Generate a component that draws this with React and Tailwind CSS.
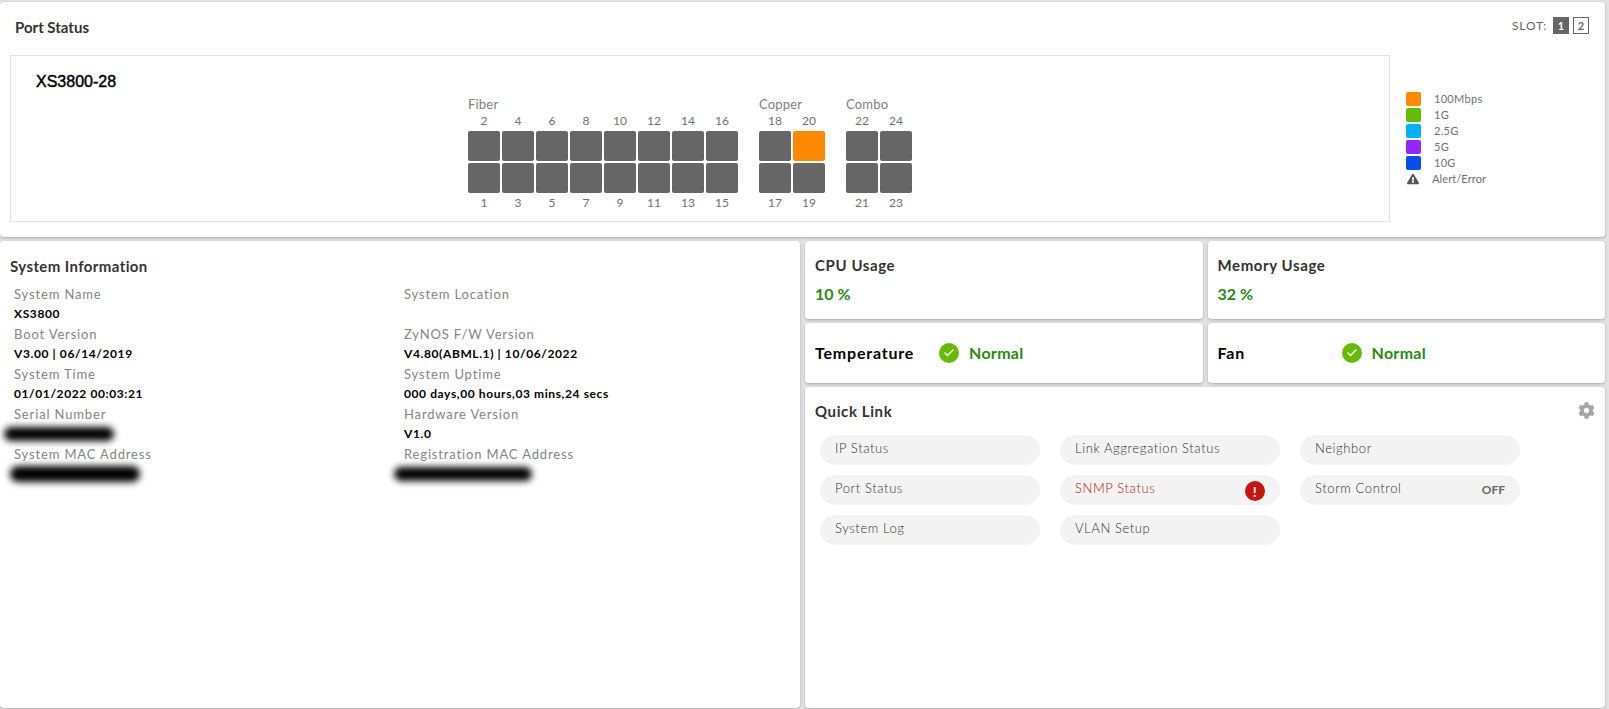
import React from "react";
import { Check } from "lucide-react";
import { FaCog, FaExclamationTriangle } from "react-icons/fa";

const groups = [
  { name: "Fiber", top: [2, 4, 6, 8, 10, 12, 14, 16], bottom: [1, 3, 5, 7, 9, 11, 13, 15] },
  { name: "Copper", top: [18, 20], bottom: [17, 19] },
  { name: "Combo", top: [22, 24], bottom: [21, 23] },
];

const legend = [
  { label: "100Mbps", color: "bg-[#ff8a00]" },
  { label: "1G", color: "bg-[#64bc00]" },
  { label: "2.5G", color: "bg-[#00b0ff]" },
  { label: "5G", color: "bg-[#9326ff]" },
  { label: "10G", color: "bg-[#0050f0]" },
];

function PortGroup({ name, top, bottom }) {
  return (
    <div>
      <div className="h-4 text-[13px] leading-4 tracking-[0.2px] text-[#808080]">{name}</div>
      <div className="flex gap-[2px]">
        {top.map((port, i) => (
          <div key={port} className="w-8">
            <div className="mt-px mb-[2px] h-4 text-center text-[12px] leading-4 text-[#707070]">{port}</div>
            <div
              className={
                port === 20
                  ? "h-[30px] rounded-[2px] bg-[#ff8a00]"
                  : "h-[30px] rounded-[2px] bg-[#666666]"
              }
            ></div>
            <div className="mt-[2px] h-[30px] rounded-[2px] bg-[#666666]"></div>
            <div className="mt-[2px] h-4 text-center text-[12px] leading-4 text-[#707070]">{bottom[i]}</div>
          </div>
        ))}
      </div>
    </div>
  );
}

function Info({ label, value, blob }) {
  return (
    <div>
      <div className="h-5 pl-1 text-[13px] leading-5 tracking-[0.85px] text-[#858585]">{label}</div>
      <div className="flex h-5 items-center pl-1 text-[12px] leading-5 font-bold tracking-[0.6px] whitespace-pre text-black">
        {blob ? <div className={blob}></div> : value}
      </div>
    </div>
  );
}

function StatCard({ title, value }) {
  return (
    <div className="h-[78px] rounded bg-white pt-[14px] pl-[10px] shadow-[0_1px_3px_rgba(0,0,0,0.25)]">
      <div className="text-[15px] leading-5 font-bold tracking-[0.6px] text-[#333333]">{title}</div>
      <div className="mt-[9px] text-[16px] leading-5 font-bold text-[#2a8a10]">{value}</div>
    </div>
  );
}

function HealthCard({ title }) {
  return (
    <div className="flex h-[60px] items-center rounded bg-white pl-[10px] shadow-[0_1px_3px_rgba(0,0,0,0.25)]">
      <div className="w-[124px] text-[16px] font-bold tracking-[0.8px] text-black">{title}</div>
      <div className="flex h-5 w-5 items-center justify-center rounded-full bg-[#64bc00]">
        <Check size={12} strokeWidth={3} className="text-white" />
      </div>
      <div className="ml-[10px] text-[16px] font-bold tracking-[0.3px] text-[#2a8a10]">Normal</div>
    </div>
  );
}

function Pill({ label, alert, right }) {
  return (
    <div className="flex h-[30px] items-center justify-between rounded-full bg-[#f3f3f3] px-[15px] text-[13px] font-light tracking-[0.6px]">
      <span className={alert ? "-mt-[2px] text-[#a82008]" : "-mt-[2px] text-[#333333]"}>{label}</span>
      {alert && (
        <span className="mt-[2px] flex h-5 w-5 items-center justify-center rounded-full bg-[#c8140f] text-[14px] font-bold text-white">
          !
        </span>
      )}
      {right && <span className="text-[12px] font-bold tracking-normal text-[#666666]">{right}</span>}
    </div>
  );
}

export default function App() {
  return (
    <div className="flex h-[709px] w-full flex-col gap-1 overflow-hidden bg-[#e3e3e3] pt-[2px] pr-1 font-['Lato',sans-serif]">
      <section className="h-[235px] shrink-0 rounded bg-white shadow-[0_1px_3px_rgba(0,0,0,0.25)]">
        <div className="flex h-[53px] items-start justify-between pt-[15px] pr-4 pl-[15px]">
          <h2 className="text-[15px] leading-5 font-bold text-[#333333]">Port Status</h2>
          <div className="flex items-center text-[12px] leading-4 text-[#666666]">
            <span className="mr-[6px] tracking-[0.8px]">SLOT:</span>
            <span className="flex h-[17px] w-4 items-center justify-center bg-[#666666] text-[11px] font-bold text-white">1</span>
            <span className="ml-1 flex h-[17px] w-4 items-center justify-center border border-[#666666] text-[11px] font-bold">2</span>
          </div>
        </div>
        <div className="flex">
          <div className="ml-[10px] h-[167px] w-[1380px] shrink-0 border border-[#e3e3e3] pt-4">
            <div className="ml-[25px] font-['Liberation_Sans',sans-serif] text-[16px] leading-5 text-black [-webkit-text-stroke:0.45px_black]">
              XS3800-28
            </div>
            <div className="mt-1 ml-[457px] flex gap-[21px]">
              {groups.map((g) => (
                <PortGroup key={g.name} {...g} />
              ))}
            </div>
          </div>
          <ul className="mt-[37px] ml-4 flex flex-col gap-[2px]">
            {legend.map((item) => (
              <li key={item.label} className="flex h-[14px] items-center">
                <span className={`h-[14px] w-[15px] rounded-[2px] ${item.color}`}></span>
                <span className="ml-[13px] text-[11px] tracking-[0.3px] text-[#707070]">{item.label}</span>
              </li>
            ))}
            <li className="flex h-[14px] items-center">
              <FaExclamationTriangle size={12} className="ml-[1px] text-[#555555]" />
              <span className="ml-[13px] text-[11px] tracking-[0.1px] text-[#707070]">Alert/Error</span>
            </li>
          </ul>
        </div>
      </section>

      <div className="grid min-h-0 flex-1 grid-cols-[800px_1fr] gap-[5px] pb-[1px]">
        <section className="rounded bg-white pt-[15px] pl-[10px] shadow-[0_1px_3px_rgba(0,0,0,0.25)]">
          <h2 className="text-[15px] leading-5 font-bold tracking-[0.4px] text-[#333333]">System Information</h2>
          <div className="mt-2 grid grid-cols-[390px_1fr]">
            <div>
              <Info label="System Name" value="XS3800" />
              <Info label="Boot Version" value="V3.00 | 06/14/2019" />
              <Info label="System Time" value="01/01/2022 00:03:21" />
              <Info
                label="Serial Number"
                blob="-ml-[10px] h-[14px] w-[110px] rounded-full bg-black blur-[3.5px]"
              />
              <Info
                label="System MAC Address"
                blob="-ml-1 h-4 w-[130px] rounded-full bg-black blur-[3.5px]"
              />
            </div>
            <div>
              <Info label="System Location" value="" />
              <Info label="ZyNOS F/W Version" value="V4.80(ABML.1) | 10/06/2022" />
              <Info label="System Uptime" value="000 days,00 hours,03 mins,24 secs" />
              <Info label="Hardware Version" value="V1.0" />
              <Info
                label="Registration MAC Address"
                blob="-ml-[10px] h-[14px] w-[138px] rounded-full bg-black blur-[3.5px]"
              />
            </div>
          </div>
        </section>

        <div className="flex flex-col gap-1">
          <div className="grid grid-cols-2 gap-x-[5px] gap-y-1">
            <StatCard title="CPU Usage" value="10 %" />
            <StatCard title="Memory Usage" value="32 %" />
            <HealthCard title="Temperature" />
            <HealthCard title="Fan" />
          </div>
          <section className="min-h-0 flex-1 rounded bg-white pt-[14px] pl-[10px] shadow-[0_1px_3px_rgba(0,0,0,0.25)]">
            <div className="flex items-center justify-between pr-[10px]">
              <h2 className="text-[15px] leading-5 font-bold tracking-[0.6px] text-[#333333]">Quick Link</h2>
              <FaCog size={17} className="-mt-[2px] text-[#a5a5a5]" />
            </div>
            <div className="mt-[14px] ml-[5px] grid w-[700px] grid-cols-3 gap-x-5 gap-y-[10px]">
              <Pill label="IP Status" />
              <Pill label="Link Aggregation Status" />
              <Pill label="Neighbor" />
              <Pill label="Port Status" />
              <Pill label="SNMP Status" alert />
              <Pill label="Storm Control" right="OFF" />
              <Pill label="System Log" />
              <Pill label="VLAN Setup" />
            </div>
          </section>
        </div>
      </div>
    </div>
  );
}
